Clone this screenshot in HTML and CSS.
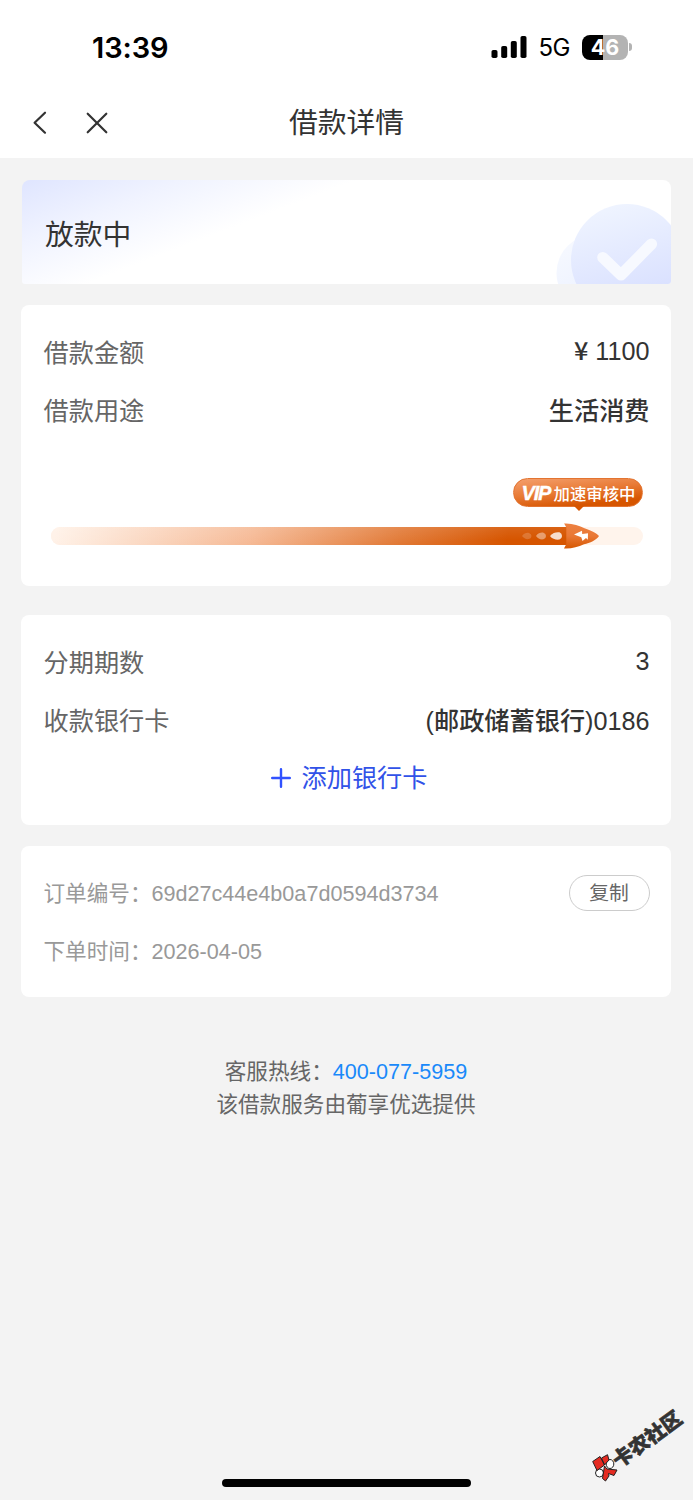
FILE: index.html
```html
<!DOCTYPE html>
<html lang="zh-CN">
<head>
<meta charset="utf-8">
<title>借款详情</title>
<link rel="stylesheet" href="styles.css">
</head>
<body>
<div class="screen">
  <header class="top">
    <div class="status-bar">
      <span class="clock">13:39</span>
      <div class="indicators">
        <svg class="signal" width="36" height="24" viewBox="0 0 36 24">
          <rect x="0.5" y="15" width="6" height="8" rx="1.8"/>
          <rect x="10.2" y="11" width="6" height="12" rx="1.8"/>
          <rect x="19.8" y="6" width="6" height="17" rx="1.8"/>
          <rect x="29.5" y="1" width="6" height="22" rx="1.8"/>
        </svg>
        <span class="network">5G</span>
        <div class="battery"><span class="battery-level">46</span></div>
        <span class="battery-cap"></span>
      </div>
    </div>
    <nav class="nav">
      <svg class="nav-icon back" width="16" height="24" viewBox="0 0 16 24"><path d="M14 1.700 L3.600 11.700 L14 21.700"/></svg>
      <svg class="nav-icon close" width="22" height="22" viewBox="0 0 22 22"><path d="M1.7 1.7 L20.3 20.3 M20.3 1.7 L1.7 20.3"/></svg>
      <h1 class="nav-title">借款详情</h1>
    </nav>
  </header>

  <main class="content">
    <section class="banner">
      <span class="banner-title">放款中</span>
      <svg class="banner-art" width="116" height="80" viewBox="0 0 116 80">
        <defs>
          <linearGradient id="disc" x1="0.35" y1="0" x2="0.6" y2="0.85">
            <stop offset="0" stop-color="#eff4ff"/><stop offset="1" stop-color="#d9e0ff"/>
          </linearGradient>
          <linearGradient id="disc-back" x1="0" y1="0" x2="0.6" y2="1">
            <stop offset="0" stop-color="#f8faff"/><stop offset="1" stop-color="#eaf0ff"/>
          </linearGradient>
        </defs>
        <circle cx="40" cy="69" r="38.5" fill="url(#disc-back)"/>
        <circle cx="72" cy="56" r="56" fill="url(#disc)"/>
        <path d="M47.8 53.5 L66 71 L96.500 40" fill="none" stroke="#f7f9ff" stroke-width="11.200" stroke-linecap="round" stroke-linejoin="round"/>
      </svg>
    </section>

    <section class="card amount-card">
      <div class="row"><span class="label">借款金额</span><span class="value"><span class="yen">¥</span> 1100</span></div>
      <div class="row"><span class="label">借款用途</span><span class="value">生活消费</span></div>
      <div class="progress">
        <div class="tip"><i class="vip">VIP</i><span class="tip-text">加速审核中</span></div>
        <div class="track">
          <div class="fill"></div>
          <svg class="rocket" width="78" height="28" viewBox="0 0 78 28">
            <defs><linearGradient id="hull" x1="0" y1="0" x2="0" y2="1">
              <stop offset="0" stop-color="#ed8142"/><stop offset="0.5" stop-color="#e97835"/><stop offset="1" stop-color="#d65802"/>
            </linearGradient></defs>
            <path d="M42 1.500 C50 1 57 3.500 62.500 6.200 C70 8.500 75.500 12 77 14 C74.500 18 68 21 62 22.300 C56 25 49 27 42 26.500 C43 24.500 44 22.800 44.300 22 V5.500 C44 4.500 43 3 42 1.500Z" fill="url(#hull)"/>
            <path d="M0 14 C2 11 5 10.500 7 11 Q9.500 12 9.500 14 Q9.500 16.500 7 17 C4 17.500 2 16.500 0 14Z" fill="#fff" opacity=".18"/>
            <path d="M14 14 C16 11 19 10.300 21.500 10.700 Q24 11.500 24 14 Q24 16.600 21.500 17.300 C18 17.700 16 16.500 14 14Z" fill="#fff" opacity=".42"/>
            <path d="M28 14 C31 10.500 34 10 37.500 10.300 Q40 11.300 40 14 Q40 16.800 37.500 17.600 C34 18 30 17 28 14Z" fill="#fff" opacity=".8"/>
            <path d="M52 12.600 L60 8.700 L60.200 12 L66 11.200 L65.800 17.800 L64 16 L60.500 19 L59.300 15.200Z" fill="#fff"/>
          </svg>
        </div>
      </div>
    </section>

    <section class="card bank-card">
      <div class="row"><span class="label">分期期数</span><span class="value">3</span></div>
      <div class="row"><span class="label">收款银行卡</span><span class="value">(邮政储蓄银行)0186</span></div>
      <div class="add">
        <svg width="20" height="20" viewBox="0 0 20 20"><path d="M10 1.200 V18.800 M1.200 10 H18.800"/></svg>
        <span class="add-text">添加银行卡</span>
      </div>
    </section>

    <section class="card order-card">
      <div class="row"><span class="order-text">订单编号：69d27c44e4b0a7d0594d3734</span><button class="copy">复制</button></div>
      <div class="row"><span class="order-text">下单时间：2026-04-05</span></div>
    </section>

    <footer class="support">
      <div>客服热线：<span class="phone">400-077-5959</span></div>
      <div>该借款服务由葡享优选提供</div>
    </footer>
  </main>

  <div class="watermark">
    <svg width="26" height="28" viewBox="0 0 26 28">
      <g stroke="#222" stroke-width="1" stroke-linejoin="round">
        <ellipse cx="18" cy="10" rx="3.800" ry="4.500" fill="#fff"/><ellipse cx="7.500" cy="19" rx="4" ry="4" fill="#fff"/>
        <path d="M0.700 7.500 L8 2.500 L12.500 11 L5 16.500Z M9.500 4 L15.500 .7 L17 6 L12.500 11Z M12.500 12 L15 15 L25 16 L22 21.500 L16.500 19.500 L17 22 L13.500 27 L10.500 24.500Z" fill="#e52b21"/>
      </g>
    </svg>
    <span class="watermark-text">卡农社区</span>
  </div>
  <div class="home-indicator"></div>
</div>
</body>
</html>
```
FILE: styles.css
```css
* { box-sizing: border-box; }
body {
  margin: 0;
  background: #f3f3f3;
  color: #333;
  font-family: "Liberation Sans", "Noto Sans CJK SC", sans-serif;
}
.screen { position: relative; height: 1500px; overflow: hidden; }
.top { height: 158px; background: #fff; }

.status-bar {
  display: flex;
  justify-content: space-between;
  align-items: center;
  height: 88px;
  padding: 6px 61px 0 92px;
  color: #000;
  font-family: Inter, sans-serif;
}
.clock { font-size: 29px; font-weight: 600; letter-spacing: -0.1px; }
.indicators { display: flex; align-items: center; }
.network { margin-left: 12px; font-size: 24px; font-weight: 400; letter-spacing: -0.5px; }
.battery {
  width: 46px;
  height: 25px;
  margin-left: 12px;
  border-radius: 8px;
  background: linear-gradient(90deg, #000 46%, #b3b3b3 46%);
  text-align: center;
}
.battery-level { display: block; color: #fff; font-size: 21.500px; line-height: 25px; font-weight: 700; }
.battery-cap { width: 3px; height: 8px; margin-left: 1px; border-radius: 0 4px 4px 0; background: #b3b3b3; }

.nav { position: relative; display: flex; align-items: center; height: 70px; padding-left: 31px; }
.nav-icon { fill: none; stroke: #333; stroke-width: 2.2; stroke-linecap: round; stroke-linejoin: round; }
.close { margin-left: 39px; }
.nav-title {
  position: absolute;
  left: 0;
  right: 0;
  margin: 0;
  text-align: center;
  font-size: 28.8px;
  line-height: 40px;
  font-weight: 400;
}

.content { padding: 22px 22px 0 21px; }
.banner {
  display: flex;
  justify-content: space-between;
  align-items: center;
  height: 104px;
  margin-left: 1px;
  padding-left: 23px;
  border-radius: 8px 8px 3px 3px;
  overflow: hidden;
  background: linear-gradient(159deg, #dfe5ff 0, #f0f3ff 58px, #fff 120px);
}
.banner-title { font-size: 28.8px; padding-top: 1px; }
.banner-art { align-self: flex-end; }

.card { padding: 0 21.500px 0 22.500px; background: #fff; border-radius: 8px; }
.row { display: flex; justify-content: space-between; align-items: center; height: 58px; font-size: 25.200px; }
.label { color: #666; padding-bottom: 2px; }
.value { font-weight: 500; padding-bottom: 2px; }
.yen { font-family: "Noto Sans CJK SC", sans-serif; line-height: 1; }
.amount-card { height: 281px; margin-top: 21px; padding-top: 18px; }
.bank-card { height: 210px; margin-top: 29px; padding-top: 18px; }
.order-card { height: 151px; margin-top: 21px; padding-top: 18px; color: #999; }
.order-card .row { font-size: 21.600px; }
.order-text { padding-bottom: 4px; }

.progress { display: flex; flex-direction: column; padding: 39px 7px 0; }
.tip {
  position: relative;
  align-self: flex-end;
  display: flex;
  align-items: center;
  width: 130px;
  height: 29px;
  padding-left: 8px;
  border-radius: 15px;
  border: 1px solid #e37431;
  background: linear-gradient(174deg, #f39b66 5%, #e87a35 45%, #d65500 82%);
  color: #fff;
}
.tip::after {
  content: "";
  position: absolute;
  top: 27px;
  left: 60px;
  border: 5px solid transparent;
  border-top-color: #d65500;
  border-bottom: 0;
}
.vip { width: 32px; font-size: 20px; line-height: 28px; font-weight: 700; letter-spacing: -1.2px; -webkit-text-stroke: 0.4px #fff; }
.tip-text { padding-top: 2px; font-size: 16.400px; line-height: 28px; font-weight: 500; white-space: nowrap; }
.track { position: relative; height: 18px; margin-top: 20px; border-radius: 9px; background: #fff4ec; }
.fill {
  width: 530px;
  height: 18px;
  border-radius: 9px 0 0 9px;
  background: linear-gradient(178deg, rgba(255,255,255,.2), rgba(255,255,255,0) 80%), linear-gradient(100deg, #fff0e5 1%, #f5b690 38%, #e17834 66%, #d65500 86%);
}
.rocket { position: absolute; left: 471px; top: -5px; }

.add { display: flex; justify-content: center; align-items: center; gap: 11px; height: 58px; padding-left: 5px; color: #3152e8; font-size: 25.200px; }
.add-text { padding-bottom: 4px; }
.add svg { fill: none; stroke: #3152ff; stroke-width: 2.400; stroke-linecap: round; }
.copy {
  width: 81px;
  height: 36px;
  padding: 0;
  border: 1px solid #ccc;
  border-radius: 18px;
  background: #fff;
  color: #666;
  font: inherit;
  font-size: 19.800px;
  line-height: 34px;
}
.support { margin-top: 59px; text-align: center; color: #666; font-size: 21.600px; line-height: 32.500px; }
.phone { color: #1989fa; }

.watermark { position: absolute; left: 592px; top: 1454px; width: 26px; height: 28px; }
.watermark-text {
  position: absolute;
  left: 21px;
  top: -9px;
  color: #333;
  font-size: 20px;
  line-height: 24px;
  font-weight: 900;
  white-space: nowrap;
  -webkit-text-stroke: 0.6px #333;
  transform: rotate(-36deg);
  transform-origin: 10px 12px;
}
.home-indicator { position: absolute; left: 222px; bottom: 13px; width: 249px; height: 8px; border-radius: 4px; background: #000; }
```
